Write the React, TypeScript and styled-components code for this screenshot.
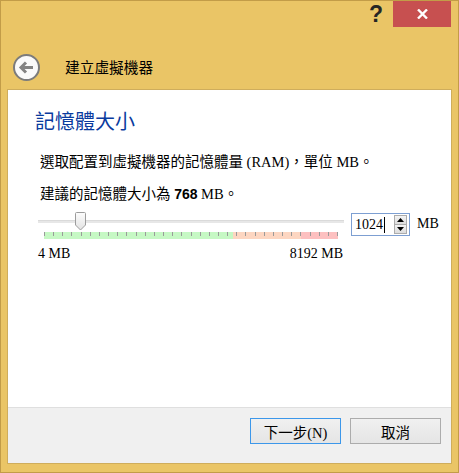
import styled, { createGlobalStyle } from 'styled-components'

const GlobalStyle = createGlobalStyle`
  html, body {
    margin: 0;
    padding: 0;
    background: #eac566;
  }
  body {
    font-family: "Liberation Serif", "Noto Sans CJK TC", serif;
    color: #000;
  }
`

const MIN_MB = 4
const MAX_MB = 8192
const VALUE_MB = 1024
const STRIP_WIDTH = 294
const TICKS = 33

const Window = styled.div`
  width: 459px;
  height: 473px;
  box-sizing: border-box;
  background: #eac566;
  border: 1px solid #c29c48;
  padding: 0 6px 8px;
  display: flex;
  flex-direction: column;
`

const TitleBar = styled.div`
  height: 26px;
  display: flex;
  justify-content: flex-end;
  align-items: flex-start;
  padding-right: 1px;
`

const Help = styled.span`
  font-family: "Liberation Sans", sans-serif;
  font-weight: 700;
  font-size: 23px;
  line-height: 26px;
  color: #252525;
  margin-right: 10px;
`

const CloseButton = styled.div`
  width: 58px;
  height: 26px;
  background: #c75050;
  display: flex;
  align-items: center;
  justify-content: center;
`

const Header = styled.div`
  height: 62px;
  box-sizing: border-box;
  padding: 27px 0 0 6px;
  display: flex;
  align-items: flex-start;
  gap: 25px;
`

const HeaderTitle = styled.div`
  font-size: 14.7px;
  line-height: 20px;
  margin-top: 4px;
`

const Client = styled.div`
  flex: 1;
  border: 1px solid #cfad5c;
  display: flex;
  flex-direction: column;
`

const Page = styled.div`
  flex: 1;
  background: #fff;
  padding: 20px 0 0 27px;
`

const Heading = styled.h1`
  margin: 0;
  font-size: 20px;
  line-height: 24px;
  font-weight: 400;
  color: #0a3b9e;
`

const Text = styled.p<{ $gap: number }>`
  margin: ${(p) => p.$gap}px 0 0 5px;
  font-size: 14.5px;
  line-height: 20px;
`

const Strong = styled.b`
  font-family: "Liberation Sans", sans-serif;
  font-size: 14px;
`

const SliderRow = styled.div`
  margin: 8px 0 0 3px;
  display: flex;
  align-items: flex-start;
`

const SliderColumn = styled.div`
  width: 306px;
`

const TrackArea = styled.div`
  position: relative;
  height: 20px;
`

const Track = styled.div`
  position: absolute;
  left: 0;
  right: 0;
  top: 8px;
  height: 3px;
  background: #e7e7e7;
  border-top: 1px solid #dadada;
  box-sizing: border-box;
`

const Thumb = styled.svg`
  position: absolute;
  top: 0;
`

const Strip = styled.div`
  position: relative;
  margin: 0 6px;
  height: 7px;
  display: flex;
`

const Zone = styled.div<{ $color: string }>`
  background: ${(p) => p.$color};
`

const TickRow = styled.div`
  position: absolute;
  inset: 0 0 3px 0;
  display: flex;
  justify-content: space-between;
`

const Tick = styled.div`
  width: 1px;
  background: #9a9a9a;
`

const Scale = styled.div`
  margin-top: 6px;
  display: flex;
  justify-content: space-between;
  padding-right: 1px;
  font-size: 14px;
  line-height: 18px;
`

const SpinBox = styled.div`
  margin: 1px 0 0 7px;
  width: 59px;
  height: 23px;
  box-sizing: border-box;
  border: 1px solid #7d9fd2;
  background: #fff;
  display: flex;
  align-items: center;
  padding: 0 2px 0 3px;
`

const SpinValue = styled.span`
  flex: 1;
  font-size: 14px;
  line-height: 18px;
  display: flex;
  align-items: center;
`

const Caret = styled.span`
  width: 1px;
  height: 16px;
  background: #000;
  margin-left: 1px;
`

const SpinButtons = styled.div`
  width: 13px;
  height: 19px;
  box-sizing: border-box;
  border: 1px solid #acacac;
  display: flex;
  flex-direction: column;
`

const SpinButton = styled.div<{ $top?: boolean }>`
  flex: 1;
  background: linear-gradient(#f4f4f4, #dcdcdc);
  border-bottom: ${(p) => (p.$top ? '1px solid #acacac' : 'none')};
  display: flex;
  align-items: center;
  justify-content: center;
`

const Unit = styled.span`
  margin: 3px 0 0 7px;
  font-size: 14px;
  line-height: 18px;
`

const Footer = styled.div`
  height: 45px;
  border-top: 1px solid #dfdfdf;
  background: #f0f0f0;
  display: flex;
  justify-content: flex-end;
  align-items: flex-start;
  gap: 9px;
  padding: 10px 10px 0 0;
`

const Button = styled.div<{ $default?: boolean }>`
  width: 91px;
  height: 26px;
  box-sizing: border-box;
  border: 1px solid ${(p) => (p.$default ? '#3c97ea' : '#acacac')};
  background: linear-gradient(#f0f0f0, #e5e5e5);
  display: flex;
  align-items: center;
  justify-content: center;
  font-size: 14.5px;
`

function BackIcon() {
  return (
    <svg width="27" height="27" viewBox="0 0 27 27">
      <circle cx="13.5" cy="13.5" r="12.5" fill="#fafafa" stroke="#7c7c7c" strokeWidth="2" />
      <path d="M8 13.5 H20" stroke="#838383" strokeWidth="3" />
      <path d="M13 8.5 L8 13.5 L13 18.5" fill="none" stroke="#838383" strokeWidth="3" />
    </svg>
  )
}

function Arrow({ up }: { up?: boolean }) {
  return (
    <svg width="7" height="4" viewBox="0 0 7 4">
      <path d={up ? 'M0 4 L3.5 0 L7 4Z' : 'M0 0 L3.5 4 L7 0Z'} fill="#000" />
    </svg>
  )
}

export default function App() {
  const frac = (VALUE_MB - MIN_MB) / (MAX_MB - MIN_MB)
  const thumbLeft = 6 + frac * STRIP_WIDTH - 5.5
  const greenW = 189
  const orangeW = 68
  const redW = STRIP_WIDTH - greenW - orangeW

  return (
    <>
      <GlobalStyle />
      <Window>
        <TitleBar>
          <Help>?</Help>
          <CloseButton>
            <svg width="11" height="10" viewBox="0 0 11 10">
              <path d="M1 0.5 L10 9.5 M10 0.5 L1 9.5" stroke="#fff" strokeWidth="2.4" />
            </svg>
          </CloseButton>
        </TitleBar>
        <Header>
          <BackIcon />
          <HeaderTitle>建立虛擬機器</HeaderTitle>
        </Header>
        <Client>
          <Page>
            <Heading>記憶體大小</Heading>
            <Text $gap={18}>選取配置到虛擬機器的記憶體量 (RAM)，單位 MB。</Text>
            <Text $gap={12}>
              建議的記憶體大小為 <Strong>768</Strong> MB。
            </Text>
            <SliderRow>
              <SliderColumn>
                <TrackArea>
                  <Track />
                  <Thumb width="11" height="19" viewBox="0 0 11 19" style={{ left: thumbLeft }}>
                    <defs>
                      <linearGradient id="thumbFill" x1="0" y1="0" x2="0" y2="1">
                        <stop offset="0" stopColor="#fdfdfd" />
                        <stop offset="1" stopColor="#e2e2e2" />
                      </linearGradient>
                    </defs>
                    <path
                      d="M1.5 0.5 H9.5 A1 1 0 0 1 10.5 1.5 V13 L5.5 18 L0.5 13 V1.5 A1 1 0 0 1 1.5 0.5Z"
                      fill="url(#thumbFill)"
                      stroke="#9c9c9c"
                    />
                  </Thumb>
                </TrackArea>
                <Strip>
                  <Zone $color="#c6f8c4" style={{ width: greenW }} />
                  <Zone $color="#fdd6c1" style={{ width: orangeW }} />
                  <Zone $color="#fdc0c0" style={{ width: redW }} />
                  <TickRow>
                    {Array.from({ length: TICKS }, (_, i) => (
                      <Tick key={i} />
                    ))}
                  </TickRow>
                </Strip>
                <Scale>
                  <span>4 MB</span>
                  <span>8192 MB</span>
                </Scale>
              </SliderColumn>
              <SpinBox>
                <SpinValue>
                  {VALUE_MB}
                  <Caret />
                </SpinValue>
                <SpinButtons>
                  <SpinButton $top>
                    <Arrow up />
                  </SpinButton>
                  <SpinButton>
                    <Arrow />
                  </SpinButton>
                </SpinButtons>
              </SpinBox>
              <Unit>MB</Unit>
            </SliderRow>
          </Page>
          <Footer>
            <Button $default>下一步(N)</Button>
            <Button>取消</Button>
          </Footer>
        </Client>
      </Window>
    </>
  )
}
